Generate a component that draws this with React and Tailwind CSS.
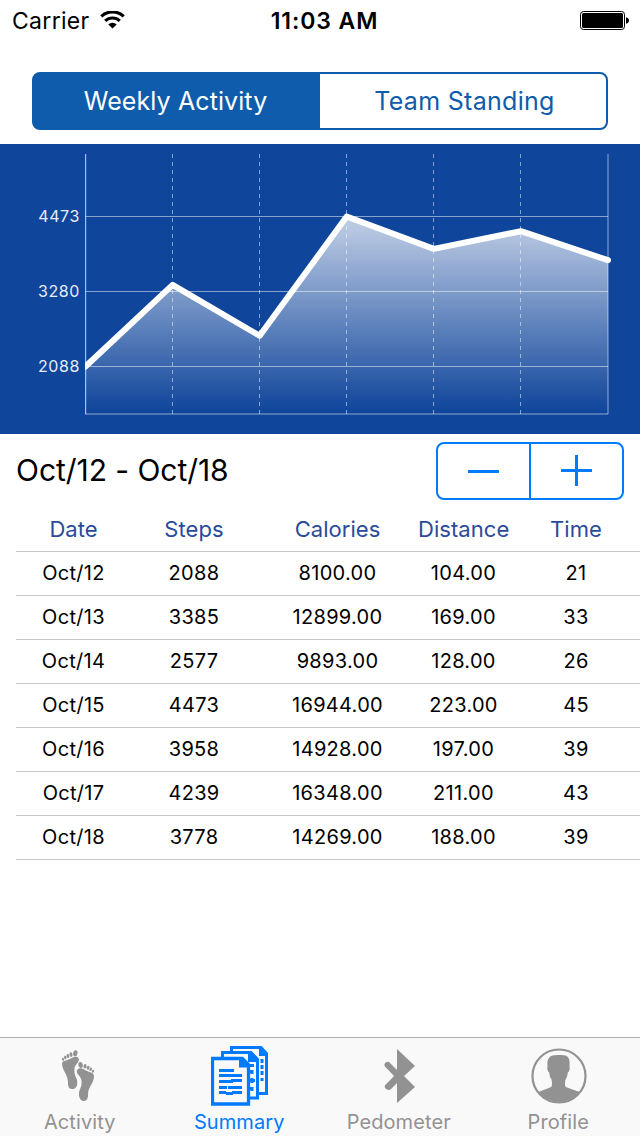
const days = [
  { date: 'Oct/12', steps: 2088, calories: '8100.00', distance: '104.00', time: 21 },
  { date: 'Oct/13', steps: 3385, calories: '12899.00', distance: '169.00', time: 33 },
  { date: 'Oct/14', steps: 2577, calories: '9893.00', distance: '128.00', time: 26 },
  { date: 'Oct/15', steps: 4473, calories: '16944.00', distance: '223.00', time: 45 },
  { date: 'Oct/16', steps: 3958, calories: '14928.00', distance: '197.00', time: 39 },
  { date: 'Oct/17', steps: 4239, calories: '16348.00', distance: '211.00', time: 43 },
  { date: 'Oct/18', steps: 3778, calories: '14269.00', distance: '188.00', time: 39 },
];

const gridCols = 'grid grid-cols-[115px_126px_161px_91px_134px] ml-4 items-center text-center border-b border-[#c8c7cc]';

function StatusBar() {
  return (
    <header className="grid grid-cols-3 items-center h-10 pl-3 pr-[11px]">
      <div className="flex items-center gap-2.5">
        <span className="pt-0.5 text-[23px] leading-none tracking-[0.3px]">Carrier</span>
        <svg width="25" height="18" viewBox="0 0 25 18" fill="none" stroke="#000" strokeWidth="3.2">
          <path d="M1.3 5.4a16.4 16.4 0 0 1 22.4 0" />
          <path d="M5.2 9.9a10.6 10.6 0 0 1 14.6 0" />
          <path d="M12.5 17.6 8.3 13.4a6 6 0 0 1 8.4 0z" fill="#000" stroke="none" />
        </svg>
      </div>
      <span className="pt-0.5 pl-2 text-center text-[23px] leading-none font-semibold tracking-[0.9px] whitespace-nowrap">11:03 AM</span>
      <svg className="justify-self-end" width="49" height="19" viewBox="0 0 49 19">
        <rect x="0.5" y="0.5" width="44" height="18" rx="3" fill="none" stroke="#000" />
        <rect x="2" y="2" width="41" height="15" rx="1.5" />
        <path d="M46 6.2c2 .5 3 1.700 3 3.300s-1 2.800-3 3.300z" />
      </svg>
    </header>
  );
}

function SegmentedControl() {
  return (
    <div className="mx-8 mt-8 flex h-[58px] rounded-lg border-2 border-[#0e5cab] bg-linear-to-r from-[#0e5cab] from-50% to-white to-50% overflow-hidden text-[25px] text-[#0e5cab]">
      <button className="flex-1 pt-0.5 pr-[3px] text-white tracking-[0.1px]">Weekly Activity</button>
      <button className="flex-1 pt-0.5 pl-[3px] tracking-[0.3px]">Team Standing</button>
    </div>
  );
}

function StepsChart() {
  const left = 85.5;
  const right = 608;
  const gap = (right - left) / (days.length - 1);
  const points = days.map((d, i) => [left + i * gap, 72.5 + ((4473 - d.steps) * 150) / 2385]);
  const line = points.map((p) => p.join(',')).join(' ');

  return (
    <svg className="mt-3.5 block bg-[#0f459b]" width="640" height="290" viewBox="0 0 640 290">
      <defs>
        <linearGradient id="fill" gradientUnits="userSpaceOnUse" x1="0" y1="72" x2="0" y2="268">
          <stop offset="0" stopColor="#fff" stopOpacity="0.75" />
          <stop offset="1" stopColor="#fff" stopOpacity="0" />
        </linearGradient>
      </defs>
      <polygon points={`${left},270 ${line} ${right},270`} fill="url(#fill)" />
      <g stroke="#fff" strokeOpacity="0.5">
        {[72.5, 147.5, 222.5].map((y) => (
          <line key={y} x1={left} x2={right} y1={y} y2={y} />
        ))}
        {points.slice(1, -1).map(([x]) => (
          <line key={x} x1={Math.floor(x) + 0.5} x2={Math.floor(x) + 0.5} y1="10" y2="270" strokeDasharray="4 4" />
        ))}
        <line x1="85.5" x2="85.5" y1="10" y2="270" strokeOpacity="0.6" />
      </g>
      <g stroke="#fff" strokeOpacity="0.27" strokeWidth="2">
        <line x1="86" x2="86" y1="10" y2="270" strokeOpacity="0.12" />
        <line x1="608" x2="608" y1="10" y2="270" />
        <line x1="85" x2="608" y1="270" y2="270" />
      </g>
      <clipPath id="plot">
        <rect x="85" y="0" width="555" height="290" />
      </clipPath>
      <polyline points={line} fill="none" stroke="#fff" strokeWidth="6" strokeLinecap="round" strokeLinejoin="round" clipPath="url(#plot)" />
      <g fill="#e7edf7" fontSize="16" textAnchor="end" letterSpacing="0.6">
        <text x="80" y="77.500">4473</text>
        <text x="80" y="152.500">3280</text>
        <text x="80" y="227.500">2088</text>
      </g>
    </svg>
  );
}

function Stepper() {
  return (
    <div className="flex w-[188px] h-[58px] rounded-lg border-2 border-[#007aff]">
      <button className="w-[93px] flex items-center justify-center border-r-2 border-[#007aff]">
        <span className="w-[31px] h-[3px] bg-[#007aff]" />
      </button>
      <button className="flex-1 pb-0.5 flex items-center justify-center">
        <svg width="31" height="31" viewBox="0 0 31 31" fill="#007aff">
          <path d="M0 14h14V0h3v14h14v3H17v14h-3V17H0z" />
        </svg>
      </button>
    </div>
  );
}

function ActivityTable() {
  return (
    <section>
      <div className={`${gridCols} h-11 text-[22px] text-[#2a4b9b] tracking-[0.05px]`}>
        <span>Date</span>
        <span>Steps</span>
        <span>Calories</span>
        <span>Distance</span>
        <span>Time</span>
      </div>
      {days.map((day) => (
        <div key={day.date} className={`${gridCols} h-11 pb-px text-[20px] tracking-[0.3px]`}>
          <span>{day.date}</span>
          <span>{day.steps}</span>
          <span>{day.calories}</span>
          <span>{day.distance}</span>
          <span>{day.time}</span>
        </div>
      ))}
    </section>
  );
}

function FeetIcon() {
  return (
    <svg className="mr-1" width="34" height="54" viewBox="0 0 34 54" fill="currentColor">
      <path d="M1 15C1 11 6 12 10 9.500c2-1.300 4-2 6-1.500 3 1 2 4.500 0 6.500-2.500 2.500-3 5-2.500 9 .3 4 3 6 2.800 10.500-.2 4-2.300 6-5 6-3 0-4.300-2-4.300-5 0-4-.5-6-2-9.500S1 19 1 15z" />
      <ellipse cx="14.300" cy="4.200" rx="2.200" ry="3" transform="rotate(12 14.300 4.200)" />
      <ellipse cx="10" cy="5.600" rx="1.500" ry="2.300" transform="rotate(-8 10 5.600)" />
      <ellipse cx="6.900" cy="7" rx="1.400" ry="2" transform="rotate(-12 6.900 7)" />
      <ellipse cx="4.300" cy="8.500" rx="1.200" ry="1.800" transform="rotate(-20 4.300 8.500)" />
      <ellipse cx="2" cy="10.300" rx="1.100" ry="1.500" transform="rotate(-25 2 10.300)" />
      <path d="M33 27c0-4-5-3.500-9-6-2-1.300-4-2-6-1.500-3 1-2.500 4.500-.5 6.500 2.500 2.500 3.500 5 3 9-.3 4-2.700 6-2.500 10.500.2 4 2 6.500 4.700 6.500 3 0 4.300-2.500 4.300-5.500 0-4 .5-6 2.500-9.500S33 31 33 27z" />
      <ellipse cx="19.600" cy="16" rx="2.200" ry="3" transform="rotate(-8 19.600 16)" />
      <ellipse cx="24" cy="17.300" rx="1.500" ry="2.300" transform="rotate(8 24 17.300)" />
      <ellipse cx="27.100" cy="18.700" rx="1.400" ry="2" transform="rotate(12 27.100 18.700)" />
      <ellipse cx="29.700" cy="20.300" rx="1.200" ry="1.800" transform="rotate(20 29.700 20.300)" />
      <ellipse cx="32" cy="22.300" rx="1.100" ry="1.500" transform="rotate(25 32 22.300)" />
    </svg>
  );
}

function DocumentsIcon() {
  return (
    <svg width="58" height="60" viewBox="0 0 58 60" fill="none" stroke="currentColor" strokeWidth="3">
      <path d="M20.500 6V1.500H50l5.500 6V47.500H48" />
      <path d="M48 1v9h9l-1-3-6-6z" fill="currentColor" stroke="none" />
      <path d="M11.500 11V6.500H40l6.500 7v38.500H38" />
      <path d="M37 5v11h11l-1-4-6-6z" fill="currentColor" stroke="none" />
      <path d="M1.500 12.500H31l6.500 6.500v39h-36z" strokeWidth="3.300" />
      <path d="M28 11v10.500h11V18l-7-7z" fill="currentColor" stroke="none" />
      <path d="M8 24.500h15M8 29.500h23M8 35.500h14M20 34.500h11M8 41.500h8M17 41.500h14M8 46.500h7M15 47.500h7M21 46.500h10" strokeWidth="2.800" />
      <path d="M39 19.500h4M39 25.500h2M41 24v4M39 34.500h5M41 32v5M39 42.500h2M41 41v4" />
      <path d="M51 13v4M51 19v4M51 25v4M51 32v3" />
    </svg>
  );
}

function BluetoothIcon() {
  return (
    <svg className="ml-px" width="32" height="54" viewBox="0 0 32 54" fill="currentColor">
      <path d="M13 0 31 17 20 27l11 11-18 16V34l-6.500 6.500Q3 42 .8 38.500V36.500L10 27 .5 17v-2Q2 12 5 13l8 8z" />
    </svg>
  );
}

function ProfileIcon() {
  return (
    <svg width="56" height="56" viewBox="0 0 56 56">
      <circle cx="28" cy="28" r="26.500" fill="none" stroke="currentColor" strokeWidth="2.200" />
      <path
        d="M7.500 44c4-2 9-3 12.500-5 1.500-1 1-5 .5-7.500-1.500-2-2-4.500-2.300-7-1.700-1-2.200-3.500-1.700-6-.5-7 .5-11.500 10-11.500h4c8 0 8.500 5 8 11.500.5 2.500 0 5-1.700 6-.3 2.500-.8 5-2.300 7-.5 2.500-1 6.500.5 7.500 3.500 2 9.500 3 13.500 5A26 26 0 0 1 7.500 44z"
        fill="currentColor"
      />
    </svg>
  );
}

function TabBar() {
  const tabs = [
    { label: 'Activity', icon: <FeetIcon /> },
    { label: 'Summary', icon: <DocumentsIcon />, active: true },
    { label: 'Pedometer', icon: <BluetoothIcon /> },
    { label: 'Profile', icon: <ProfileIcon /> },
  ];

  return (
    <nav className="flex h-[99px] pr-0.5 bg-[#f9f9f9] border-t border-[#b2b2b2]">
      {tabs.map((tab) => (
        <button key={tab.label} className={`flex-1 flex flex-col items-center ${tab.active ? 'text-[#007aff]' : 'text-[#929292]'}`}>
          <span className="h-[76px] pl-px flex items-center">{tab.icon}</span>
          <span className="text-[20px] leading-none -mt-0.5 tracking-[0.1px]">{tab.label}</span>
        </button>
      ))}
    </nav>
  );
}

export default function App() {
  return (
    <div className="w-[640px] h-[1136px] flex flex-col bg-white text-black overflow-hidden font-['Inter',sans-serif]">
      <StatusBar />
      <SegmentedControl />
      <StepsChart />
      <div className="flex items-center justify-between h-[74px] pl-4 pr-4">
        <h1 className="pb-0.5 text-[30px] leading-none tracking-[-0.05px]">Oct/12 - Oct/18</h1>
        <Stepper />
      </div>
      <ActivityTable />
      <div className="flex-1" />
      <TabBar />
    </div>
  );
}
